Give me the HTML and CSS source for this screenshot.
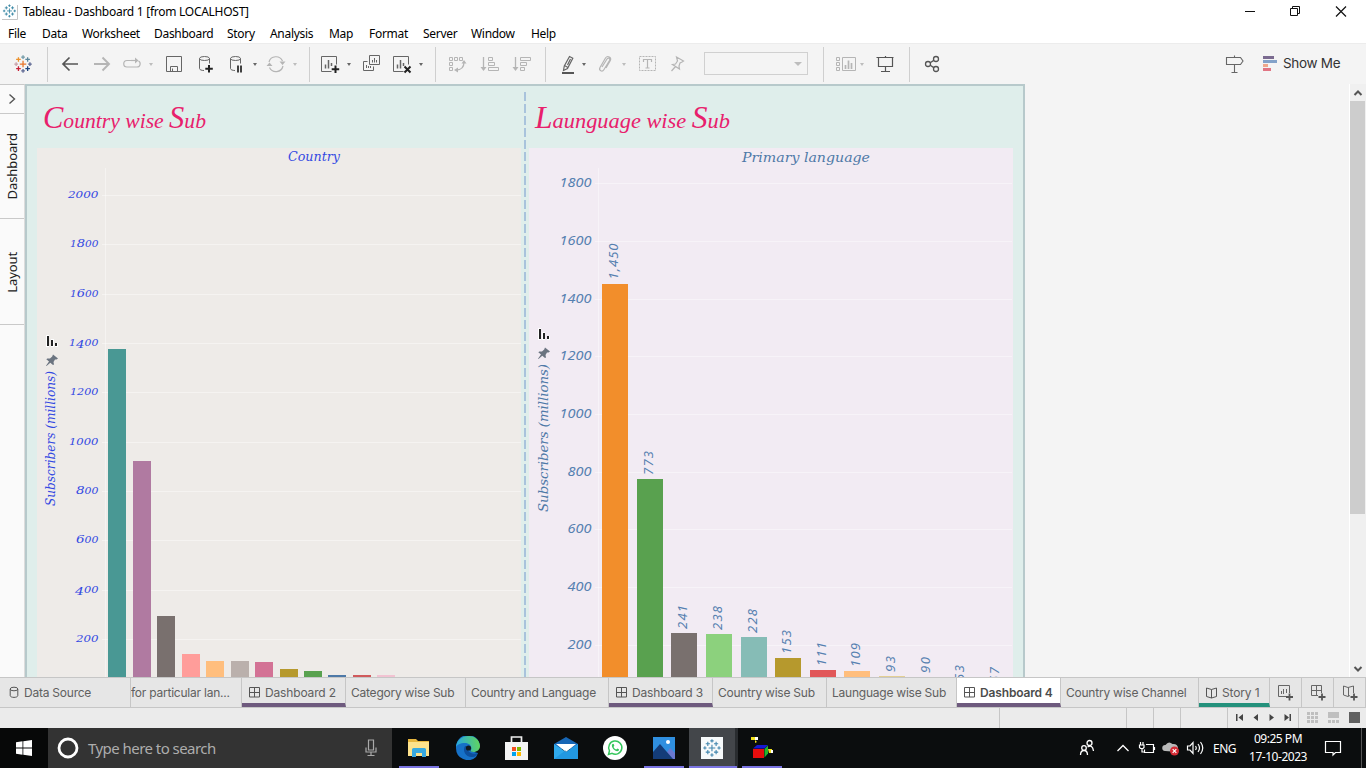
FILE: index.html
```html
<!DOCTYPE html>
<html lang="en">
<head>
<meta charset="utf-8">
<title>Tableau - Dashboard 1 [from LOCALHOST]</title>
<link rel="stylesheet" href="styles.css">
</head>
<body>
<svg class="defs" width="0" height="0">
  <defs>
    <g id="plusmark" fill="none" stroke-width="1.4">
      <path stroke="#e8762c" d="M12 8.500v7M8.500 12h7"/>
      <path stroke="#c72037" d="M7 14.500v5M4.500 17h5"/>
      <path stroke="#eb912c" d="M7 4.500v5M4.500 7h5"/>
      <path stroke="#5b879b" d="M17 4.500v5M14.500 7h5"/>
      <path stroke="#1f457e" d="M17 14.500v5M14.500 17h5"/>
      <path stroke="#7199a6" d="M12 2.500v4M10 4.500h4"/>
      <path stroke="#5c6692" d="M12 17.500v4M10 19.500h4M19.500 10v4M17.500 12h4"/>
      <path stroke="#c9a0a8" d="M4.500 10v4M2.500 12h4"/>
    </g>
    <g id="bluemark" fill="none" stroke-width="1.300">
      <path d="M12 8v8M8 12h8M7 4.500v5M4.500 7h5M17 4.500v5M14.500 7h5M7 14.500v5M4.500 17h5M17 14.500v5M14.500 17h5M12 1.500v4M10 3.500h4M12 18.500v4M10 20.500h4M3.500 10v4M1.500 12h4M20.500 10v4M18.500 12h4"/>
    </g>
    <path id="pin" d="M7.500 0.500L12.500 4.500L11 5.500L9.500 5.500L8 8L8.500 10.500L7.500 11L4.800 8.800L1 12L0.500 11.700L3.500 7.500L0.800 5.200L1.800 4.400L4.500 4.500L6.700 2.500Z" fill="#6b7480"/>
    <path id="grid" d="M.5 .5h10v9.500h-10zM.5 5.500h10M5.500 .5v9.500" fill="none" stroke="#555" />
    <path id="book" d="M5.500 2.500v8.500M.5 1l5 1.500l5-1.500v8.500l-5 1.500l-5-1.500z" fill="none" stroke="#555"/>
  </defs>
</svg>

<header class="titlebar">
  <svg class="app-icon" width="16" height="16" viewBox="0 0 16 16"><path d="M15.500 1v14.500H0" fill="none" stroke="#c5c5c5"/><g transform="translate(0 -.5) scale(.62)"><use href="#bluemark" stroke="#2b7f9e" stroke-width="1.700"/></g></svg>
  <span class="title-text">Tableau - Dashboard 1 [from LOCALHOST]</span>
  <svg class="window-controls" width="110" height="20" viewBox="0 0 110 20" fill="none" stroke="#111"><path d="M4 9.500h10"/><path d="M49.500 6.500h7v7h-7zM51.500 6.500v-2h7v7h-2"/><path d="M95 4.500l10 10M105 4.500l-10 10" stroke-width="1.200"/></svg>
</header>
<nav class="menubar"><span>File</span><span>Data</span><span>Worksheet</span><span>Dashboard</span><span>Story</span><span>Analysis</span><span>Map</span><span>Format</span><span>Server</span><span>Window</span><span>Help</span></nav>

<div class="toolbar">
  <svg class="icon" viewBox="0 0 24 24"><g transform="translate(1 1) scale(.92)"><use href="#plusmark"/></g></svg>
  <i class="sep"></i>
  <svg class="icon" viewBox="0 0 24 24" stroke="#555" stroke-width="1.700"><path d="M20 12H5M11.500 5.500L5 12l6.500 6.500"/></svg>
  <svg class="icon" viewBox="0 0 24 24" stroke="#b5b5b5" stroke-width="1.900"><path d="M4 12h15M12.500 5.500L19 12l-6.500 6.500"/></svg>
  <svg class="icon" viewBox="0 0 24 24" stroke="#b5b5b5" stroke-width="1.200"><path d="M11 8.500H7a3.200 3.200 0 0 0 0 6.500h10a3.200 3.200 0 0 0 1.500-6"/><path d="M11 8.500h5"/><path d="M15 5.500v6l3.500-3z" fill="#b5b5b5" stroke="none"/></svg>
  <i class="caret light"></i>
  <svg class="icon" viewBox="0 0 24 24" stroke="#666"><path d="M4.500 4.500h15v15h-15zM8.500 19.500v-5h7v5M10.500 16.500v3"/></svg>
  <svg class="icon" viewBox="0 0 24 24" stroke="#666"><ellipse cx="10.500" cy="6.500" rx="5" ry="2"/><path d="M5.500 6.500v10c0 1.200 2 2 4.500 2M15.500 6.500v5"/><path d="M15 13v7.500M11.300 16.700h7.500" stroke="#222" stroke-width="2"/></svg>
  <svg class="icon" viewBox="0 0 24 24" stroke="#666"><ellipse cx="11.500" cy="6.500" rx="5" ry="2"/><path d="M6.500 6.500v10c0 1.200 2 2 4.500 2M16.500 6.500v5"/><path d="M14 13.500v7M17 13.500v7" stroke="#222" stroke-width="1.700"/></svg>
  <i class="caret"></i>
  <svg class="icon" viewBox="0 0 24 24" stroke="#b5b5b5" stroke-width="1.200"><path d="M5 10a7.200 7.200 0 0 1 13.500-1M19 14a7.200 7.200 0 0 1-13.500 1.500"/><path d="M15.500 9.500h6l-3 3.500zM2.500 14h6l-3-3.500z" fill="#b5b5b5" stroke="none"/></svg>
  <i class="caret light"></i>
  <i class="sep"></i>
  <svg class="icon" viewBox="0 0 24 24" stroke="#666"><path d="M13.500 19.500h-10v-15h15v8"/><path d="M7.500 12.500v4M10.500 8v8.500M13.500 11v3" stroke-width="1.500"/><path d="M17.500 13.500v7.500M13.700 17.300h7.500" stroke="#222" stroke-width="2"/></svg>
  <i class="caret"></i>
  <svg class="icon" viewBox="0 0 24 24" stroke="#666"><path d="M10.500 3.500h10v9h-10zM8.500 9.500h-4v9h10v-4M13.500 8v2.500M15.500 6v4.500M17.500 8v2.500M7.500 13v3M9.500 14v2M11.500 14v2"/></svg>
  <svg class="icon" viewBox="0 0 24 24" stroke="#666"><path d="M13.500 19.500h-10v-15h15v8"/><path d="M7.500 12.500v4M10.500 8v8.500M13.500 11v3" stroke-width="1.500"/><path d="M14.500 14.500l6 6M20.500 14.500l-6 6" stroke="#222" stroke-width="2"/></svg>
  <i class="caret"></i>
  <i class="sep"></i>
  <svg class="icon" viewBox="0 0 24 24" stroke="#b5b5b5"><path d="M4.500 5.500h3v3h-3zM9.500 5.500h3v3h-3zM14.500 5.500h3v3h-3zM4.500 10.500h3v3h-3zM4.500 15.500h3v3h-3z"/><path d="M19 10c0 5-3 8-8 8" stroke-width="1.300"/><path d="M16.500 11.500h5l-2.500-3.500zM13 15.500v5l-4-2.500z" fill="#b5b5b5" stroke="none"/></svg>
  <svg class="icon" viewBox="0 0 24 24" stroke="#b5b5b5"><path d="M5.500 5v12" stroke-width="1.300"/><path d="M2.500 15h6l-3 4z" fill="#b5b5b5" stroke="none"/><path d="M10.500 5.500h4v3h-4zM10.500 10.500h6v3h-6zM10.500 15.500h10v3h-10z"/></svg>
  <svg class="icon" viewBox="0 0 24 24" stroke="#b5b5b5"><path d="M5.500 5v12" stroke-width="1.300"/><path d="M2.500 15h6l-3 4z" fill="#b5b5b5" stroke="none"/><path d="M10.500 5.500h10v3h-10zM10.500 10.500h6v3h-6zM10.500 15.500h4v3h-4z"/></svg>
  <i class="sep"></i>
  <svg class="icon" viewBox="0 0 24 24" stroke="#666" stroke-width="1.200"><path d="M13.500 4.500l3.300 1.700-5.300 10.300-4 2 .8-4.500zM8.500 13.500l3 1.700M11.500 13l3-6"/><path d="M6 21h12" stroke="#555" stroke-width="2"/></svg>
  <i class="caret"></i>
  <svg class="icon" viewBox="0 0 24 24" stroke="#b5b5b5" stroke-width="1.200"><path d="M9 15l5-8c1.200-1.800 3.500-.5 2.500 1.500l-5.500 9c-1.800 3-5.500 1-4-2L12.500 6c2-3 6.500-.8 4.700 2.700L13 16"/></svg>
  <i class="caret light"></i>
  <svg class="icon" viewBox="0 0 24 24" stroke="#b5b5b5"><path d="M4.500 4.500h16v14h-16z" stroke-dasharray="2 1"/><path d="M8.500 10V7.500h8V10M12.500 7.500v8.500M10.500 16h4" stroke-width="1.200"/></svg>
  <svg class="icon" viewBox="0 0 24 24" stroke="#b5b5b5" stroke-width="1.200"><path d="M11.500 5l7 4-1.500 1-2 1-1 3 .5 3-7-4.500 3-.5 2-3zM10.500 14.500L6.500 19"/></svg>
  <div class="select"><i class="caret light"></i></div>
  <i class="sep"></i>
  <svg class="icon" viewBox="0 0 24 24" stroke="#b5b5b5"><path d="M1.500 5.500h3v3h-3zM1.500 10.500h3v3h-3zM1.500 15.500h3v3h-3zM7.500 5.500h13v13h-13z"/><path d="M10.500 13v4M13.500 8.500V17M16.500 11v6" stroke-width="1.700"/></svg>
  <i class="caret light"></i>
  <svg class="icon" viewBox="0 0 24 24" stroke="#555"><path d="M3.500 5.500h17M5.500 5.500v9h14v-9M12.500 4v2M12.500 14.500v5M8 19.500h9" stroke-width="1.200"/></svg>
  <i class="sep"></i>
  <svg class="icon" viewBox="0 0 24 24" stroke="#555" stroke-width="1.300"><circle cx="8" cy="12" r="2.500"/><circle cx="16" cy="7" r="2.500"/><circle cx="16" cy="17" r="2.500"/><path d="M10.200 10.700l3.600-2.300M10.200 13.300l3.600 2.300"/></svg>
  <svg class="icon" viewBox="0 0 24 24" stroke="#666" stroke-width="1.100"><path d="M4.500 5.500h14l2.500 3.500-2.500 3.500h-14zM12.500 3.500v2M12.500 12.500v8M9.500 20.500h6"/></svg>
  <div class="showme"><svg width="16" height="16" viewBox="0 0 16 16"><path fill="#7b6b90" d="M1 1h11v3H1z"/><path fill="#83a2c9" d="M1 5h14v3H1z"/><path fill="#eea88c" d="M1 9h5v3H1z"/><path fill="#e17583" d="M1 13h8v3H1z"/></svg><span>Show Me</span></div>
</div>

<main class="workspace">
  <aside class="side">
    <div class="side-arrow"><svg width="8" height="12" viewBox="0 0 8 12"><path d="M1.500 1.500L6.500 6l-5 4.500" fill="none" stroke="#555" stroke-width="1.400"/></svg></div>
    <div class="side-tab"><span>Dashboard</span></div>
    <div class="side-tab"><span>Layout</span></div>
  </aside>
  <section class="dashboard">
    <svg class="zone" width="497" height="591" viewBox="27 86 497 591">
      <text class="sheet-title" x="43" y="128" textLength="163" lengthAdjust="spacingAndGlyphs"><tspan class="cap">C</tspan>ountry wise <tspan class="cap">S</tspan>ub</text>
      <rect x="37" y="148" width="484" height="529" fill="#eeebe8"/>
      <path class="rule" d="M105.500 168v509M102 195.500h419M102 244.500h419M102 294.500h419M102 343.500h419M102 392.500h419M102 442.500h419M102 491.500h419M102 540.500h419M102 590.500h419M102 639.500h419"/>
      <g class="country-text">
        <text x="288" y="161" textLength="52" lengthAdjust="spacingAndGlyphs">Country</text>
        <g class="nums">
        <text x="68" y="198" textLength="30.500" lengthAdjust="spacingAndGlyphs">2000</text>
        <text x="70" y="247" textLength="28.500" lengthAdjust="spacingAndGlyphs">1<tspan class="tall">8</tspan>00</text>
        <text x="70" y="297" textLength="28.500" lengthAdjust="spacingAndGlyphs">1<tspan class="tall">6</tspan>00</text>
        <text x="69" y="346" textLength="29.500" lengthAdjust="spacingAndGlyphs">1<tspan class="tall" dy="2">4</tspan><tspan dy="-2">00</tspan></text>
        <text x="70" y="395" textLength="28.500" lengthAdjust="spacingAndGlyphs">1200</text>
        <text x="69" y="445" textLength="29.500" lengthAdjust="spacingAndGlyphs">1000</text>
        <text x="76" y="494" textLength="22.500" lengthAdjust="spacingAndGlyphs"><tspan class="tall">8</tspan>00</text>
        <text x="76" y="543" textLength="22.500" lengthAdjust="spacingAndGlyphs"><tspan class="tall">6</tspan>00</text>
        <text x="75" y="593" textLength="23.500" lengthAdjust="spacingAndGlyphs"><tspan class="tall" dy="2">4</tspan><tspan dy="-2">00</tspan></text>
        <text x="76" y="642" textLength="22.500" lengthAdjust="spacingAndGlyphs">200</text>
        </g>
        <text transform="translate(55 506) rotate(-90)" textLength="135" lengthAdjust="spacingAndGlyphs">Subscribers (millions)</text>
      </g>
      <path d="M46 335h3v12h-3zM51 339h3v8h-3zM55 343h3v4h-3z" fill="#fff"/>
      <path d="M47 336h2v10h-2zM51 340h2v6h-2zM55 343h2v3h-2z" fill="#222"/>
      <use href="#pin" x="45.500" y="354"/>
      <g>
        <rect x="108" y="349" width="18" height="328" fill="#499894"/>
        <rect x="133" y="461" width="18" height="216" fill="#b07aa1"/>
        <rect x="157" y="616" width="18" height="61" fill="#79706e"/>
        <rect x="182" y="654" width="18" height="23" fill="#ff9d9a"/>
        <rect x="206" y="661" width="18" height="16" fill="#ffbe7d"/>
        <rect x="231" y="661" width="18" height="16" fill="#bab0ac"/>
        <rect x="255" y="662" width="18" height="15" fill="#d37295"/>
        <rect x="280" y="669" width="18" height="8" fill="#b6992d"/>
        <rect x="304" y="671" width="18" height="6" fill="#59a14f"/>
        <rect x="328" y="675" width="18" height="2" fill="#4e79a7"/>
        <rect x="353" y="675" width="18" height="2" fill="#d05a5c"/>
        <rect x="377" y="675" width="18" height="2" fill="#f2c3d2"/>
      </g>
    </svg>
    <div class="divider"></div>
    <svg class="zone" width="497" height="591" viewBox="526 86 497 591">
      <text class="sheet-title" x="535" y="128" textLength="195" lengthAdjust="spacingAndGlyphs"><tspan class="cap">L</tspan>aunguage wise <tspan class="cap">S</tspan>ub</text>
      <rect x="529" y="148" width="484" height="529" fill="#f2ebf3"/>
      <path class="rule" d="M598.500 168v509M595 183.500h417M595 241.500h417M595 299.500h417M595 356.500h417M595 414.500h417M595 472.500h417M595 529.500h417M595 587.500h417M595 645.500h417"/>
      <g class="lang-text">
        <text class="bolder" x="742" y="162" textLength="128" lengthAdjust="spacingAndGlyphs">Primary language</text>
        <text x="559.500" y="187" textLength="32" lengthAdjust="spacingAndGlyphs">1800</text>
        <text x="559.500" y="245" textLength="32" lengthAdjust="spacingAndGlyphs">1600</text>
        <text x="559.500" y="303" textLength="32" lengthAdjust="spacingAndGlyphs">1400</text>
        <text x="559.500" y="360" textLength="32" lengthAdjust="spacingAndGlyphs">1200</text>
        <text x="559.500" y="418" textLength="32" lengthAdjust="spacingAndGlyphs">1000</text>
        <text x="567.500" y="476" textLength="24" lengthAdjust="spacingAndGlyphs">800</text>
        <text x="567.500" y="533" textLength="24" lengthAdjust="spacingAndGlyphs">600</text>
        <text x="567.500" y="591" textLength="24" lengthAdjust="spacingAndGlyphs">400</text>
        <text x="567.500" y="649" textLength="24" lengthAdjust="spacingAndGlyphs">200</text>
        <text class="bolder" transform="translate(548 512) rotate(-90)" textLength="148" lengthAdjust="spacingAndGlyphs">Subscribers (millions)</text>
        <text transform="translate(618 279.500) rotate(-90)" textLength="36">1,450</text>
        <text transform="translate(653 475) rotate(-90)" textLength="24">773</text>
        <text transform="translate(687 629) rotate(-90)" textLength="24">241</text>
        <text transform="translate(722 630) rotate(-90)" textLength="24">238</text>
        <text transform="translate(757 633) rotate(-90)" textLength="24">228</text>
        <text transform="translate(791 654) rotate(-90)" textLength="24">153</text>
        <text transform="translate(826 666) rotate(-90)" textLength="24">111</text>
        <text transform="translate(860 667) rotate(-90)" textLength="24">109</text>
        <text transform="translate(895 672) rotate(-90)" textLength="16">93</text>
        <text transform="translate(930 673) rotate(-90)" textLength="16">90</text>
        <text transform="translate(964 681) rotate(-90)" textLength="16">53</text>
        <text transform="translate(999 683) rotate(-90)" textLength="16">57</text>
      </g>
      <path d="M538 328h3v12h-3zM542 332h3v8h-3zM547 336h3v4h-3z" fill="#fff"/>
      <path d="M539 329h2v10h-2zM543 333h2v6h-2zM547 336h2v3h-2z" fill="#222"/>
      <use href="#pin" x="537.500" y="347"/>
      <g>
        <rect x="602" y="284" width="26" height="393" fill="#f28e2b"/>
        <rect x="637" y="479" width="26" height="198" fill="#59a14f"/>
        <rect x="671" y="633" width="26" height="44" fill="#79706e"/>
        <rect x="706" y="634" width="26" height="43" fill="#8cd17d"/>
        <rect x="741" y="637" width="26" height="40" fill="#86bcb6"/>
        <rect x="775" y="658" width="26" height="19" fill="#b6992d"/>
        <rect x="810" y="670" width="26" height="7" fill="#e15759"/>
        <rect x="844" y="671" width="26" height="6" fill="#ffbe7d"/>
        <rect x="879" y="676" width="26" height="1" fill="#e3cf94"/>
      </g>
    </svg>
  </section>
  <div class="scrollbar">
    <svg width="16" height="17" viewBox="0 0 16 17"><path d="M4.500 11l3.500-3.500 3.500 3.500" fill="none" stroke="#555" stroke-width="2"/></svg>
    <div class="thumb"></div>
    <svg width="16" height="17" viewBox="0 0 16 17"><path d="M4.500 7l3.500 3.500 3.500-3.500" fill="none" stroke="#555" stroke-width="2"/></svg>
  </div>
</main>

<nav class="tabs">
  <div class="tab first"><svg width="10" height="13" viewBox="0 0 10 13" fill="none" stroke="#555"><ellipse cx="5" cy="3" rx="3.800" ry="1.800"/><path d="M1.200 3v6.500c0 2.500 7.600 2.500 7.600 0V3"/></svg><span>Data Source</span></div>
  <div class="tab flush"><span>for particular lan...</span></div>
  <div class="tab dash"><svg width="11" height="12"><use href="#grid"/></svg><span>Dashboard 2</span></div>
  <div class="tab"><span>Category wise Sub</span></div>
  <div class="tab"><span>Country and Language</span></div>
  <div class="tab dash"><svg width="11" height="12"><use href="#grid"/></svg><span>Dashboard 3</span></div>
  <div class="tab"><span>Country wise Sub</span></div>
  <div class="tab"><span>Launguage wise Sub</span></div>
  <div class="tab dash active"><svg width="11" height="12"><use href="#grid"/></svg><span>Dashboard 4</span></div>
  <div class="tab"><span>Country wise Channel</span></div>
  <div class="tab dash story"><svg width="11" height="12"><use href="#book"/></svg><span>Story 1</span></div>
  <div class="tab add"><svg width="16" height="16" viewBox="0 0 16 16" fill="none" stroke="#666"><path d="M9 11.500H.5V.5h11V8M3.500 6v3M5.500 4v5M8.500 4v4"/><path d="M11.500 8.500v7M8 12h7" stroke="#555" stroke-width="1.800"/></svg></div>
  <div class="tab add"><svg width="16" height="16" viewBox="0 0 16 16" fill="none" stroke="#666"><path d="M8 10.500H1.500V.5h10V8M1.500 5.500h10M6.500 .5v10"/><path d="M12 8.500v7M8.500 12h7" stroke="#555" stroke-width="1.800"/></svg></div>
  <div class="tab add"><svg width="16" height="16" viewBox="0 0 16 16" fill="none" stroke="#666"><path d="M8 10.500l-2 1-4.500-1.500V1L6 2.500 11.500 1v7M6.500 2.500v8.500"/><path d="M12 8.500v7M8.500 12h7" stroke="#555" stroke-width="1.800"/></svg></div>
</nav>
<div class="statusbar">
  <i></i><i></i><i></i><i></i><i></i>
  <div class="pager"><svg width="70" height="19" viewBox="0 0 70 19" fill="#444"><path d="M8 6h1.500v7H8zM15 6v7l-4.500-3.500zM30 6v7l-4.500-3.500zM41.500 6v7l4.500-3.500zM56.500 6v7l4.500-3.500zM61.500 6H63v7h-1.500z"/></svg></div>
  <div class="views"><svg width="66" height="19" viewBox="0 0 66 19" fill="#bfbfbf"><path d="M8 4h3v3H8zM12 4h3v3h-3zM16 4h3v3h-3zM8 8h3v3H8zM12 8h3v3h-3zM16 8h3v3h-3zM8 12h3v3H8zM12 12h3v3h-3zM16 12h3v3h-3zM29 4h11v6H29zM29 12h3v3h-3zM33 12h3v3h-3zM37 12h3v3h-3z"/><path fill="#606060" d="M50 4h11v11H50z"/></svg></div>
</div>

<footer class="taskbar">
  <div class="start"><svg width="16" height="16" viewBox="0 0 16 16" fill="#fff"><path d="M0 2.300L6.500 1.300V7.600H0zM7.300 1.200L16 0v7.600H7.300zM0 8.400h6.500v6.300L0 13.700zM7.300 8.400H16V16l-8.700-1.200z"/></svg></div>
  <div class="search">
    <svg width="22" height="22" viewBox="0 0 22 22"><circle cx="11" cy="11" r="9" fill="none" stroke="#fff" stroke-width="2.800"/></svg>
    <span>Type here to search</span>
    <svg width="12" height="18" viewBox="0 0 12 18" fill="none" stroke="#aaa" stroke-width="1.200"><path d="M3.500 1h5v10h-5zM1 8.500V13h10V8.500M6 13v3.500M2.500 16.500h7"/></svg>
  </div>
  <div class="apps">
    <div class="app run"><svg width="24" height="24" viewBox="0 0 24 24"><path fill="#e8b73f" d="M1 3h8l2 2h11v4H1z"/><path fill="#fde28c" d="M1 6h21v14H1z"/><path fill="#38a9e0" d="M5 21v-7.500q0-1.500 1.500-1.500h11q1.500 0 1.500 1.500V21h-4v-4H9v4z"/></svg></div>
    <div class="app"><svg width="24" height="24" viewBox="0 0 24 24"><defs><linearGradient id="eg" x1="0" x2="1" y1=".3" y2=".2"><stop offset="0" stop-color="#28a8e0"/><stop offset="1" stop-color="#62d65a"/></linearGradient></defs><path d="M0 12a12 12 0 0 0 20 9l2-4-8-2 10-5A12 12 0 0 0 0 12z" fill="#1671c8"/><path fill="url(#eg)" d="M0 11C1-3 23-4 24 10c0 5-5 7-9.500 5.500C17 11 14 7 9 7 4 7 1 9 0 11z"/><path fill="#0d4f9d" d="M9 10c-3 5 1 12 8 11 2 0 4-2 5-4-4 2-9 0-10-3-.6-2 .5-4 .5-4z"/><circle cx="12.500" cy="12" r="2.600" fill="#111a20"/></svg></div>
    <div class="app"><svg width="24" height="24" viewBox="0 0 24 24"><path d="M6.500 7V1h10v6" fill="none" stroke="#eee" stroke-width="1.700"/><path fill="#f4f4f4" d="M0 6h23v18H0z"/><path fill="#f25022" d="M7 11h4v4H7z"/><path fill="#7fba00" d="M12 11h4v4h-4z"/><path fill="#00a4ef" d="M7 16h4v4H7z"/><path fill="#ffb900" d="M12 16h4v4h-4z"/></svg></div>
    <div class="app"><svg width="24" height="24" viewBox="0 0 24 24"><path fill="#1766b5" d="M0 8L12 1l12 7v5H0z"/><path fill="#fff" d="M2 8h20l-10 8z"/><path fill="#2fa9ec" d="M0 8l12 8 12-8v15H0z"/><path fill="#1688d6" d="M0 23l12-9v2l12-8v15z" opacity=".5"/></svg></div>
    <div class="app"><svg width="24" height="24" viewBox="0 0 24 24"><circle cx="12" cy="12" r="12" fill="#fff"/><path d="M5.500 18.500l1-3.700a6.600 6.600 0 1 1 2.600 2.600z" fill="none" stroke="#35c65c" stroke-width="1.500"/><path fill="#35c65c" d="M9 8.500c1.500-1.500 2 0 2.300 1.300l-.8 1.200q1 2 2.700 2.500l1.200-1c1.700.7 2 1 1.400 2-2.300 2.500-8-2.500-6.800-6z"/></svg></div>
    <div class="app run"><svg width="24" height="24" viewBox="0 0 24 24"><path fill="#2f8fe0" d="M1 1h22v22H1z"/><path fill="#6a78d0" d="M10 23l8-11 5 5v6z"/><path fill="#143c78" d="M1 16l7-8 13 15H1z"/><circle cx="16" cy="6" r="2" fill="#fff"/></svg></div>
    <div class="app run current"><svg width="24" height="24" viewBox="0 0 24 24"><path fill="#f7fafb" d="M1 1h22v22H1z"/><g transform="translate(2 2) scale(.83)"><use href="#bluemark" stroke="#4085ad"/></g></svg></div>
    <div class="app run"><svg width="24" height="24" viewBox="0 0 24 24"><path fill="#e80d0d" d="M3 13h11v9H3z"/><path fill="#1717d4" d="M3 12.500L7 9h11l-3.500 3.500z"/><path fill="#23b52e" d="M14.500 13L18 9.500v8l-3.500 4z"/><path fill="#f2e21d" d="M1 1h4v3H1zM5 4l2 2-2 1zM18 13h4v4h-3z"/><path fill="#fff" d="M5 1h3v3H5zM21 14h2v3h-2z"/></svg></div>
  </div>
  <div class="tray">
    <svg width="20" height="20" viewBox="0 0 20 20" fill="none" stroke="#fff" stroke-width="1.300"><circle cx="7" cy="10" r="2.300"/><path d="M3.500 17q0-4.500 3.500-4.500t3.500 4.500"/><circle cx="12.500" cy="5" r="2.500"/><path d="M10.500 9q5-3 6 4"/></svg>
    <svg width="20" height="20" viewBox="0 0 20 20" fill="none" stroke="#fff" stroke-width="1.300"><path d="M4.500 13l5.500-5.500 5.500 5.500"/></svg>
    <svg width="20" height="20" viewBox="0 0 20 20" fill="none" stroke="#fff" stroke-width="1.200"><path d="M9 6.500h7.500v8H7.500v-3M17.500 9v3M3.500 4v3M6 4v3M2.500 7h4.500v2.500l-1 1h-2.500l-1-1zM5 10.500V14h3"/></svg>
    <svg width="20" height="20" viewBox="0 0 20 20"><path fill="#b9b9b9" d="M4 13a3 3 0 0 1 .5-6q3-4.500 7-1 5-.5 5.500 4v4z"/><circle cx="13.500" cy="13" r="4.500" fill="#d42b35"/><path d="M11.700 11.200l3.600 3.600M15.300 11.200l-3.600 3.600" stroke="#fff" stroke-width="1.200"/></svg>
    <svg width="20" height="20" viewBox="0 0 20 20" fill="none" stroke="#fff" stroke-width="1.200"><path d="M2.500 8h2.500l3-3.500v11L5 12H2.500zM10.500 8q1.500 2 0 4M13 6q3 4 0 8M15.500 4q4.500 6 0 12"/></svg>
    <span class="lang">ENG</span>
    <div class="clock"><span>09:25 PM</span><span>17-10-2023</span></div>
    <svg width="18" height="18" viewBox="0 0 18 18" fill="none" stroke="#fff" stroke-width="1.200"><path d="M1.500 2.500h15v11h-5l-2.500 2.500v-2.500H1.500z"/></svg>
    <i class="peek"></i>
  </div>
</footer>
</body>
</html>
```
FILE: styles.css
```css
* { box-sizing: border-box; }
body { margin: 0; width: 1366px; height: 768px; overflow: hidden; display: flex; flex-direction: column; background: #fff; font-family: "Noto Sans", "Open Sans", sans-serif; font-size: 12px; color: #000; }
svg { display: block; flex: none; }
.defs { display: none; }

.titlebar { height: 23px; display: flex; align-items: center; padding-left: 2px; }
.title-text { margin-left: 5px; flex: 1; letter-spacing: -.27px; white-space: nowrap; }
.window-controls { margin-right: 15px; }
.menubar { height: 20px; padding-left: 8px; display: grid; grid-template-columns: 34px 40px 72px 73px 43px 59px 40px 54px 48px 60px 40px; line-height: 21px; letter-spacing: -.3px; }

.toolbar { height: 41px; background: #f4f4f4; border-top: 1px solid #ececec; padding-left: 11px; display: grid; align-items: center; grid-template-columns: 36px 11px 32px 30px 28px 14px 32px 30px 28px 12px 28px 17px 9px 28px 13px 31px 28px 17px 10px 33px 32px 35px 11px 25px 12px 28px 14px 30px 39px 119px 12px 24px 14px 36px 11px 302px 40px 1fr; }
.icon { width: 24px; height: 24px; fill: none; }
.sep { width: 1px; height: 35px; background: #cfcfcf; }
.caret { width: 0; height: 0; margin-left: 1px; border: 2.5px solid transparent; border-top: 3px solid #666; border-bottom: 0; }
.caret.light { border-top-color: #bdbdbd; }
.select { width: 104px; height: 23px; margin-top: -1px; border: 1px solid #d0d0d0; display: flex; justify-content: flex-end; align-items: center; padding-right: 5px; }
.select .caret { border-width: 4px 4px 0; }
.showme { display: flex; align-items: center; gap: 5px; margin-top: -2px; font: 13.500px Inter, sans-serif; color: #333; letter-spacing: -.3px; white-space: nowrap; }

.workspace { height: 593px; display: flex; background: #f4f4f4; }
.side { width: 25px; background: #fafafa; border-top: 1px solid #c9c9c9; border-right: 1px solid #dcdcdc; }
.side-arrow { height: 29px; border-bottom: 1px solid #c9c9c9; display: flex; align-items: center; justify-content: center; }
.side-tab { height: 106px; border-bottom: 1px solid #c9c9c9; display: flex; align-items: center; justify-content: center; font-size: 13px; color: #222; }
.side-tab:nth-child(2) { height: 105px; }
.side-tab span { writing-mode: vertical-rl; transform: rotate(180deg); letter-spacing: -.1px; padding-bottom: 1px; }
.dashboard { width: 1000px; height: 593px; display: flex; background: #dfeeeb; border: 2px solid #b7c9cb; border-bottom: 0; }
.zone { overflow: hidden; }
.divider { width: 2px; margin-top: 6px; background: repeating-linear-gradient(#a9c3dc 0 9px, #dfeeeb 9px 12px); }
.rule { fill: none; stroke: #fff; stroke-opacity: .4; }
.sheet-title { font: italic 22px "Liberation Serif", serif; fill: #e8206c; }
.sheet-title .cap { font-size: 31px; }
.country-text { font: italic 12px "DejaVu Serif", serif; fill: #3349e2; }
.country-text .nums { font-size: 8.500px; }
.country-text .tall { font-size: 10.500px; }
.lang-text { font: italic 13px "Noto Sans", sans-serif; fill: #5580b0; }
.lang-text .bolder { font: italic 12px "DejaVu Serif", serif; fill: #4e79a7; }
.scrollbar { width: 17px; margin-left: auto; border-left: 1px solid #fff; background: #f0f0f0; display: flex; flex-direction: column; }
.thumb { height: 413px; width: 15px; background: #cdcdcd; margin-bottom: auto; }

.tabs { height: 31px; background: #e6e6e6; border-top: 1px solid #c6c6c6; border-bottom: 1px solid #c6c6c6; display: grid; grid-template-columns: 131px 111px 104px 120px 143px 104px 114px 130px 104px 138px 71px 32px 32px 32px; font: 12px Inter, sans-serif; letter-spacing: -.23px; color: #606060; }
.tab { border-right: 1px solid #c6c6c6; display: flex; align-items: center; padding: 0 0 0 5px; white-space: nowrap; overflow: hidden; }
.tab.first { padding-left: 9px; gap: 5px; }
.tab.flush { padding-left: 0; }
.tab.dash { border-bottom: 4px solid #6e5a7e; padding: 4px 0 0 7px; gap: 5px; letter-spacing: -.15px; }
.tab.active { background: #fff; font-weight: 600; color: #4c4c4c; }
.tab.story { border-bottom-color: #24917c; }
.tab.add { justify-content: center; padding: 0; }
.statusbar { height: 20px; background: #ebebeb; display: grid; grid-template-columns: 1000px 127px 27px 27px 47px 71px 1fr; }
.statusbar > i, .pager { border-right: 1px solid #c6c6c6; }

.taskbar { height: 40px; background: #0b0d0e; display: flex; color: #fff; }
.start { width: 48px; display: flex; align-items: center; justify-content: center; background: #070808; }
.search { width: 344px; background: #333; display: flex; align-items: center; padding: 0 15px 0 9px; color: #adadad; font-size: 15px; }
.search span { flex: 1; margin-left: 9px; letter-spacing: -.55px; }
.apps { display: flex; margin-left: 3px; }
.app { width: 49px; display: flex; align-items: center; justify-content: center; position: relative; padding-right: 2px; }
.app.run::after { content: ""; position: absolute; left: 4px; bottom: 0; width: 40px; height: 2px; background: #7a74e2; }
.app.current { background: #43464a; border-right: 3px solid #292c2f; padding-right: 0; }
.app.current::after { left: 0; width: 48px; }
.tray { flex: 1; display: flex; align-items: center; justify-content: flex-end; }
.tray > svg:nth-child(1) { margin-right: 16px; }
.tray > svg:nth-child(2), .tray > svg:nth-child(3), .tray > svg:nth-child(4) { margin-right: 4px; }
.lang { width: 24px; margin-left: 8px; letter-spacing: -.5px; }
.clock { width: 60px; margin: 0 16px 0 11px; display: flex; flex-direction: column; align-items: center; line-height: 18px; letter-spacing: -.48px; white-space: nowrap; }
.peek { width: 1px; height: 40px; background: #555; margin: 0 4px 0 19px; }
```
